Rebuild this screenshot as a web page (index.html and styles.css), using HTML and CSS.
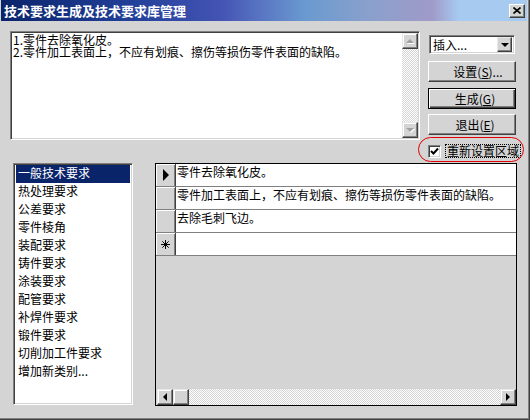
FILE: index.html
```html
<!DOCTYPE html>
<html>
<head>
<meta charset="utf-8">
<link rel="stylesheet" href="styles.css">
</head>
<body>

<div class="window">
    <div class="titlebar">
        <span class="title">技术要求生成及技术要求库管理</span>
        <span class="closeBtn">
            <svg width="8" height="7" viewBox="0 0 8 7"><path d="M0.5 0.5 L7.5 6.5 M7.5 0.5 L0.5 6.5" stroke="#000" stroke-width="1.6"/></svg>
        </span>
    </div>

    <div class="content">
        <div class="topRow">
            <div class="memo">
                <div class="memoText">
                    <div class="memoLine">1.零件去除氧化皮。</div>
                    <div class="memoLine">2.零件加工表面上，不应有划痕、擦伤等损伤零件表面的缺陷。</div>
                </div>
                <div class="vscroll">
                    <div class="sbBtn"><span class="arrowUp"></span></div>
                    <div class="sbTrack"></div>
                    <div class="sbBtn"><span class="arrowDown"></span></div>
                </div>
            </div>

            <div class="side">
                <div class="combo">
                    <span class="comboText">插入...</span>
                    <span class="comboBtn"><span class="arrowDown dark"></span></span>
                </div>
                <div class="btn first">设置(<u>S</u>)...</div>
                <div class="btn default">生成(<u>G</u>)</div>
                <div class="btn last">退出(<u>E</u>)</div>
                <div class="check">
                    <span class="checkBox">
                        <svg width="9" height="9" viewBox="0 0 9 9"><path d="M1 4 L3.5 6.5 L8 1.5" fill="none" stroke="#000" stroke-width="2"/></svg>
                    </span>
                    <span class="checkLabel">重新设置区域</span>
                </div>
            </div>
        </div>

        <div class="bottomRow">
            <ul class="listbox">
                <li class="selected">一般技术要求</li>
                <li>热处理要求</li>
                <li>公差要求</li>
                <li>零件棱角</li>
                <li>装配要求</li>
                <li>铸件要求</li>
                <li>涂装要求</li>
                <li>配管要求</li>
                <li>补焊件要求</li>
                <li>锻件要求</li>
                <li>切削加工件要求</li>
                <li>增加新类别...</li>
            </ul>

            <div class="grid">
                <div class="row">
                    <div class="rowHead"><span class="pointer"></span></div>
                    <div class="cell">零件去除氧化皮。</div>
                </div>
                <div class="row">
                    <div class="rowHead"></div>
                    <div class="cell">零件加工表面上，不应有划痕、擦伤等损伤零件表面的缺陷。</div>
                </div>
                <div class="row">
                    <div class="rowHead"></div>
                    <div class="cell">去除毛刺飞边。</div>
                </div>
                <div class="row">
                    <div class="rowHead">
                        <svg width="9" height="9" viewBox="0 0 9 9"><path d="M4.5 0 V9 M0 4.5 H9 M1.3 1.3 L7.7 7.7 M7.7 1.3 L1.3 7.7" stroke="#000" stroke-width="1"/></svg>
                    </div>
                    <div class="cell"></div>
                </div>
                <div class="gridFill"></div>
                <div class="hscroll">
                    <div class="sbBtn"><span class="arrowLeft"></span></div>
                    <div class="sbThumb"></div>
                    <div class="sbTrack"></div>
                    <div class="sbBtn"><span class="arrowRight"></span></div>
                </div>
            </div>
        </div>
    </div>

    <!-- red hand-drawn mark round the checkbox -->
    <div class="mark"></div>
</div>

</body>
</html>
```

FILE: styles.css
```css
/* Page */
body {
    margin: 0;
    font-family: "Noto Sans CJK SC", sans-serif;
    font-size: 12px;
    color: #000;
}

* {
    box-sizing: border-box;
}

/* The dialog window */
.window {
    position: relative;
    width: 530px;
    height: 420px;
    background: #d4d4d4;
    box-shadow: inset -1px -1px #404040, inset -2px -2px #808080;
}

/* Title bar */
.titlebar {
    height: 21px;
    margin: 0 3px 0 1px;
    padding: 0 2px 0 3px;
    display: flex;
    align-items: center;
    background: linear-gradient(90deg, #0a246a 0%, #22409a 25%, #4454b4 42%, #5a78c4 50%, #6a9ad0 58%, #8aa0cc 70%, #a09ac8 82%, #a6caf0 87%, #a6caf0 100%);
}

.title {
    color: #fff;
    font-weight: bold;
    font-size: 13px;
    line-height: 16px;
}

.closeBtn {
    margin-left: auto;
    width: 16px;
    height: 14px;
    display: flex;
    align-items: center;
    justify-content: center;
    background: #d4d4d4;
    border: 1px solid;
    border-color: #fff #404040 #404040 #fff;
    box-shadow: inset -1px -1px #808080;
}

/* Dialog content */
.content {
    padding: 10px 0 0 10px;
}

.topRow {
    display: flex;
    align-items: flex-start;
    gap: 8px;
}

/* Sunken edit box with text */
.memo {
    width: 410px;
    height: 109px;
    display: flex;
    background: #fff;
    border: 1px solid;
    border-color: #808080 #fff #fff #808080;
    box-shadow: inset 1px 1px #404040, inset -1px -1px #d4d4d4;
    padding: 1px;
}

.memoText {
    flex: 1;
    padding: 1px 0 0 1px;
    white-space: nowrap;
}

.memoLine {
    height: 12px;
    line-height: 12px;
}

.vscroll {
    width: 16px;
    display: flex;
    flex-direction: column;
}

.hscroll {
    height: 16px;
    display: flex;
}

.sbTrack {
    flex: 1;
    background: repeating-conic-gradient(#fff 0 25%, #d4d4d4 0 50%) 0 0 / 2px 2px;
}

.sbBtn,
.sbThumb {
    width: 16px;
    height: 16px;
    display: flex;
    align-items: center;
    justify-content: center;
    background: #d4d4d4;
    border: 1px solid;
    border-color: #e8e8e8 #404040 #404040 #e8e8e8;
    box-shadow: inset -1px -1px #808080, inset 1px 1px #fff;
}

/* Small triangles for the scroll buttons */
.arrowUp {
    border-left: 4px solid transparent;
    border-right: 4px solid transparent;
    border-bottom: 4px solid #a0a0a0;
    filter: drop-shadow(1px 1px 0 #fff);
}

.arrowDown {
    border-left: 4px solid transparent;
    border-right: 4px solid transparent;
    border-top: 4px solid #a0a0a0;
    filter: drop-shadow(1px 1px 0 #fff);
}

.arrowDown.dark {
    border-top-color: #000;
    filter: none;
}

.arrowLeft {
    border-top: 4px solid transparent;
    border-bottom: 4px solid transparent;
    border-right: 4px solid #000;
}

.arrowRight {
    border-top: 4px solid transparent;
    border-bottom: 4px solid transparent;
    border-left: 4px solid #000;
}

/* Right hand column: combo, buttons, checkbox */
.side {
    width: 88px;
    display: flex;
    flex-direction: column;
}

.combo {
    margin: 4px 0 0 1px;
    width: 86px;
    height: 19px;
    display: flex;
    align-items: center;
    background: #fff;
    border: 1px solid;
    border-color: #808080 #fff #fff #808080;
    box-shadow: inset 1px 1px #404040, inset -1px -1px #d4d4d4;
    padding: 2px;
}

.comboText {
    flex: 1;
    padding-left: 1px;
    line-height: 14px;
}

.comboBtn {
    width: 15px;
    height: 15px;
    display: flex;
    align-items: center;
    justify-content: center;
    background: #d4d4d4;
    border: 1px solid;
    border-color: #e8e8e8 #404040 #404040 #e8e8e8;
    box-shadow: inset -1px -1px #808080;
}

.btn {
    height: 21px;
    display: flex;
    align-items: center;
    justify-content: center;
    background: #d4d4d4;
    border: 1px solid;
    border-color: #fff #404040 #404040 #fff;
    box-shadow: inset -1px -1px #808080;
    line-height: 14px;
    padding-left: 6px;
}

.btn.first {
    margin-top: 7px;
    padding-left: 12px;
}

.btn.default {
    margin-top: 6px;
    border: 1px solid #000;
    box-shadow: inset 1px 1px #fff, inset -1px -1px #404040, inset -2px -2px #808080;
}

.btn.last {
    margin-top: 5px;
}

.btn u {
    text-underline-offset: 1px;
}

.check {
    margin-top: 9px;
    height: 14px;
    display: flex;
    align-items: center;
    gap: 4px;
    white-space: nowrap;
}

.checkBox {
    flex: none;
    width: 13px;
    height: 13px;
    display: flex;
    align-items: center;
    justify-content: center;
    background: #fff;
    border: 1px solid;
    border-color: #808080 #fff #fff #808080;
    box-shadow: inset 1px 1px #404040, inset -1px -1px #d4d4d4;
}

.checkLabel {
    flex: none;
    border: 1px dotted #000;
    line-height: 12px;
    padding: 0 1px;
}

/* Lower part: category list and table */
.bottomRow {
    margin-top: 5px;
    display: flex;
}

.listbox {
    margin: 0 0 0 3px;
    width: 120px;
    height: 242px;
    list-style: none;
    background: #fff;
    border: 1px solid;
    border-color: #808080 #fff #fff #808080;
    box-shadow: inset 1px 1px #404040, inset -1px -1px #d4d4d4;
    padding: 1px 2px;
}

.listbox li {
    height: 18px;
    line-height: 16px;
    padding-left: 2px;
    white-space: nowrap;
}

.listbox li.selected {
    background: #0a246a;
    color: #fff;
}

/* Table with row selectors */
.grid {
    margin-left: 22px;
    width: 362px;
    height: 243px;
    display: flex;
    flex-direction: column;
    border: 1px solid #000;
    background: #d4d4d4;
}

.row {
    display: flex;
    height: 23px;
    border-bottom: 1px solid #808080;
}

.rowHead {
    width: 20px;
    display: flex;
    align-items: center;
    justify-content: center;
    background: #d4d4d4;
    border-right: 1px solid #404040;
    box-shadow: inset 1px 1px #fff, inset -1px 0 #808080;
}

.pointer {
    border-top: 6px solid transparent;
    border-bottom: 6px solid transparent;
    border-left: 6px solid #000;
    margin-left: 1px;
}

.cell {
    flex: 1;
    background: #fff;
    line-height: 16px;
    padding: 0 0 0 1px;
    white-space: nowrap;
    overflow: hidden;
}

.gridFill {
    flex: 1;
}

.hscroll {
    margin: 0 0 0 1px;
}

/* Red ellipse drawn over the dialog */
.mark {
    position: absolute;
    left: 418px;
    top: 137px;
    width: 106px;
    height: 25px;
    border: 1px solid #e00000;
    border-radius: 13px;
}
```
